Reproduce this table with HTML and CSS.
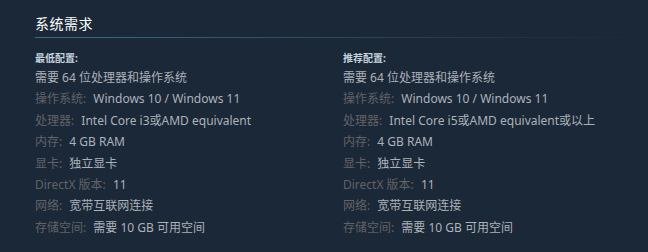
FILE: index.html
```html
<!DOCTYPE html>
<html lang="zh-CN">
<head>
    <meta charset="UTF-8">
    <title>系统需求</title>
    <link rel="stylesheet" href="styles.css">
</head>
<body>
    <div class="sysreq">
        <h2>系统需求</h2>
        <div class="sysreq-contents">
            <div class="sysreq-col">
                <ul>
                    <li class="col-title">最低配置:</li>
                    <li>需要 64 位处理器和操作系统</li>
                    <li><span class="label">操作系统:</span> Windows 10 / Windows 11</li>
                    <li><span class="label">处理器:</span> Intel Core i3或AMD equivalent</li>
                    <li><span class="label">内存:</span> 4 GB RAM</li>
                    <li><span class="label">显卡:</span> 独立显卡</li>
                    <li><span class="label">DirectX 版本:</span> 11</li>
                    <li><span class="label">网络:</span> 宽带互联网连接</li>
                    <li><span class="label">存储空间:</span> 需要 10 GB 可用空间</li>
                </ul>
            </div>
            <div class="sysreq-col">
                <ul>
                    <li class="col-title">推荐配置:</li>
                    <li>需要 64 位处理器和操作系统</li>
                    <li><span class="label">操作系统:</span> Windows 10 / Windows 11</li>
                    <li><span class="label">处理器:</span> Intel Core i5或AMD equivalent或以上</li>
                    <li><span class="label">内存:</span> 4 GB RAM</li>
                    <li><span class="label">显卡:</span> 独立显卡</li>
                    <li><span class="label">DirectX 版本:</span> 11</li>
                    <li><span class="label">网络:</span> 宽带互联网连接</li>
                    <li><span class="label">存储空间:</span> 需要 10 GB 可用空间</li>
                </ul>
            </div>
        </div>
    </div>
</body>
</html>
```

FILE: styles.css
```css
body {
    margin: 0;
    background-color: #1b2838;
    font-family: 'Noto Sans', 'Noto Sans CJK SC', sans-serif;
    color: #acb2b8;
}

.sysreq {
    padding: 14px 0 0 35px;
    width: 616px;
}

h2 {
    margin: 0;
    padding-bottom: 5px;
    font-family: 'Noto Sans CJK SC', sans-serif;
    font-size: 14px;
    font-weight: normal;
    line-height: 18px;
    color: #ffffff;
    letter-spacing: 0.5px;
    border-bottom: 1px solid transparent;
    border-image: linear-gradient(to right, #3b6e8c 0%, rgba(59, 110, 140, 0.15) 80%, rgba(59, 110, 140, 0) 100%) 1;
}

.sysreq-contents {
    display: flex;
    padding-top: 13px;
}

.sysreq-col {
    width: 308px;
    flex-shrink: 0;
}

ul {
    list-style: none;
    margin: 0;
    padding: 0;
}

li {
    font-size: 12px;
    line-height: 16px;
    margin-bottom: 5.4px;
    white-space: nowrap;
}

.col-title {
    font-size: 10px;
    font-weight: bold;
    line-height: 14px;
    color: #c6d4df;
    margin-bottom: 5px;
}

.label {
    color: #626366;
    margin-right: 4px;
}
```
